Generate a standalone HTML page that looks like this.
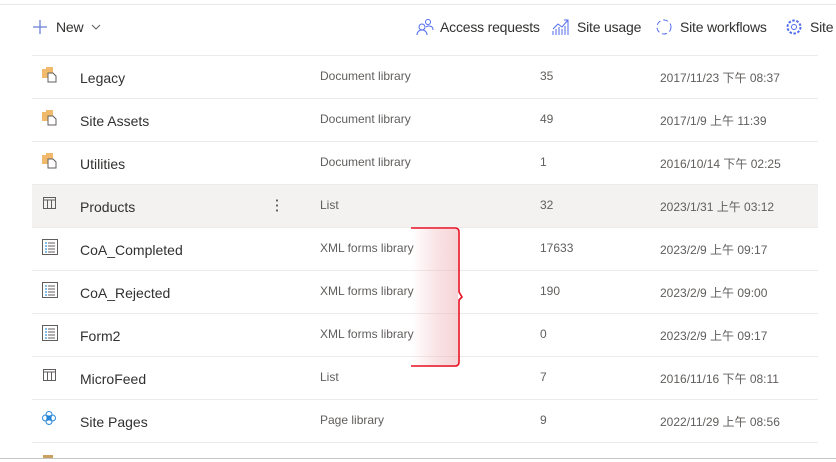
<!DOCTYPE html>
<html><head><meta charset="utf-8"><style>
body{margin:0;width:836px;height:462px;overflow:hidden;background:#fff;font-family:"Segoe UI","Liberation Sans","Noto Sans CJK TC",sans-serif;color:#323130;position:relative}
.a{position:absolute;white-space:nowrap}
.top{position:absolute;left:0;top:4px;width:836px;height:1px;background:#e8e8e8}
.hr{position:absolute;left:32px;width:786px;height:1px;background:#edebe9}
.name{font-size:14px;color:#323130;margin-top:1px}
.small{font-size:12px;color:#605e5c;margin-top:1px}
.cmd{font-size:14px;color:#323130;top:19px;letter-spacing:-0.2px}
</style></head><body>
<div class="top"></div>
<svg class="a" style="left:32px;top:19px" width="16" height="16"><path d="M8 1v14M1 8h14" stroke="#6b7fd7" stroke-width="1.3"/></svg>
<div class="a cmd" style="left:56px">New</div>
<svg class="a" style="left:91px;top:23px" width="10" height="8"><path d="M1 2l4 4 4-4" stroke="#605e5c" fill="none"/></svg>
<svg class="a" style="left:416px;top:18px" width="18" height="18"><circle cx="6" cy="9" r="3" fill="none" stroke="#4f6bed"/><path d="M1 17c0-3 2-5 5-5s5 2 5 5" fill="none" stroke="#4f6bed"/><circle cx="12" cy="4" r="2.5" fill="none" stroke="#4f6bed"/><path d="M10 9c1-1 2-1 3-1 2 0 4 1 4 4" fill="none" stroke="#4f6bed"/></svg>
<div class="a cmd" style="left:440px">Access requests</div>
<svg class="a" style="left:552px;top:18px" width="18" height="18"><path d="M1 17V13M4 17V11M7 17V9M10 17V11M13 17V8M16 17V5" stroke="#4f6bed"/><path d="M1 11l5-5 4 3 6-7M12 2h4v4" stroke="#4f6bed" fill="none"/></svg>
<div class="a cmd" style="left:577px">Site usage</div>
<svg class="a" style="left:655px;top:18px" width="18" height="18"><circle cx="9" cy="9" r="7" fill="none" stroke="#4f6bed" stroke-dasharray="5 3"/></svg>
<div class="a cmd" style="left:680px">Site workflows</div>
<svg class="a" style="left:785px;top:18px" width="18" height="18"><circle cx="9" cy="9" r="2.5" fill="none" stroke="#4f6bed"/><circle cx="9" cy="9" r="6.5" fill="none" stroke="#4f6bed" stroke-dasharray="2.5 1.6" stroke-width="2"/></svg>
<div class="a cmd" style="left:810px">Site</div>
<div class="hr" style="top:55px"></div>
<div class="a" style="left:32px;top:185px;width:786px;height:42px;background:#f3f2f1"></div>
<div class="a" style="left:276px;top:198px;width:2px;height:16px;background:radial-gradient(circle,#605e5c 1px,transparent 1.2px) 0 0/2px 5px"></div>

<div class="hr" style="top:98px"></div><div class="hr" style="top:141px"></div><div class="hr" style="top:184px"></div><div class="hr" style="top:227px"></div><div class="hr" style="top:270px"></div><div class="hr" style="top:313px"></div><div class="hr" style="top:356px"></div><div class="hr" style="top:399px"></div><div class="hr" style="top:442px"></div>
<div class="a" style="left:0;top:458px;width:836px;height:1px;background:#c8c6c4"></div>

<svg class="a" style="left:42px;top:67px" width="16" height="16"><rect x="0" y="2" width="11" height="9" fill="#f0b96b"/><rect x="4" y="0" width="7" height="3" fill="#f0b96b"/><path d="M6 6h5l3 3v6H6z" fill="#fff" stroke="#605e5c"/></svg>
<svg class="a" style="left:42px;top:110px" width="16" height="16"><rect x="0" y="2" width="11" height="9" fill="#f0b96b"/><rect x="4" y="0" width="7" height="3" fill="#f0b96b"/><path d="M6 6h5l3 3v6H6z" fill="#fff" stroke="#605e5c"/></svg>
<svg class="a" style="left:42px;top:153px" width="16" height="16"><rect x="0" y="2" width="11" height="9" fill="#f0b96b"/><rect x="4" y="0" width="7" height="3" fill="#f0b96b"/><path d="M6 6h5l3 3v6H6z" fill="#fff" stroke="#605e5c"/></svg>
<svg class="a" style="left:43px;top:197px" width="14" height="13"><rect x=".5" y=".5" width="12" height="11" fill="none" stroke="#605e5c"/><path d="M.5 3h12M4.5 3v9M8.5 3v9" stroke="#605e5c"/></svg>
<svg class="a" style="left:43px;top:369px" width="14" height="13"><rect x=".5" y=".5" width="12" height="11" fill="none" stroke="#605e5c"/><path d="M.5 3h12M4.5 3v9M8.5 3v9" stroke="#605e5c"/></svg>
<svg class="a" style="left:42px;top:239px" width="16" height="16"><rect x=".5" y=".5" width="15" height="15" fill="none" stroke="#605e5c"/><path d="M3 4h2M3 7h2M3 10h2M3 13h2" stroke="#0078d4"/><path d="M6 4h7M6 7h7M6 10h7M6 13h7" stroke="#605e5c"/></svg>
<svg class="a" style="left:42px;top:282px" width="16" height="16"><rect x=".5" y=".5" width="15" height="15" fill="none" stroke="#605e5c"/><path d="M3 4h2M3 7h2M3 10h2M3 13h2" stroke="#0078d4"/><path d="M6 4h7M6 7h7M6 10h7M6 13h7" stroke="#605e5c"/></svg>
<svg class="a" style="left:42px;top:325px" width="16" height="16"><rect x=".5" y=".5" width="15" height="15" fill="none" stroke="#605e5c"/><path d="M3 4h2M3 7h2M3 10h2M3 13h2" stroke="#0078d4"/><path d="M6 4h7M6 7h7M6 10h7M6 13h7" stroke="#605e5c"/></svg>
<svg class="a" style="left:42px;top:411px" width="14" height="14"><circle cx="7" cy="7" r="2.5" fill="#0078d4"/><circle cx="7" cy="3.5" r="3" fill="none" stroke="#2b88d8"/><circle cx="7" cy="10.5" r="3" fill="none" stroke="#2b88d8"/><circle cx="3.5" cy="7" r="3" fill="none" stroke="#2b88d8"/><circle cx="10.5" cy="7" r="3" fill="none" stroke="#2b88d8"/></svg>
<div class="a" style="left:43px;top:455px;width:10px;height:3px;background:#c8a060"></div>

<div class="a name" style="left:80px;top:69px">Legacy</div><div class="a small" style="left:320px;top:68px">Document library</div><div class="a small" style="left:540px;top:68px">35</div><div class="a small" style="left:660px;top:68px">2017/11/23 下午 08:37</div>
<div class="a name" style="left:80px;top:112px">Site Assets</div><div class="a small" style="left:320px;top:111px">Document library</div><div class="a small" style="left:540px;top:111px">49</div><div class="a small" style="left:660px;top:111px">2017/1/9 上午 11:39</div>
<div class="a name" style="left:80px;top:155px">Utilities</div><div class="a small" style="left:320px;top:154px">Document library</div><div class="a small" style="left:540px;top:154px">1</div><div class="a small" style="left:660px;top:154px">2016/10/14 下午 02:25</div>
<div class="a name" style="left:80px;top:198px">Products</div><div class="a small" style="left:320px;top:197px">List</div><div class="a small" style="left:540px;top:197px">32</div><div class="a small" style="left:660px;top:197px">2023/1/31 上午 03:12</div>
<div class="a name" style="left:80px;top:241px">CoA_Completed</div><div class="a small" style="left:320px;top:240px">XML forms library</div><div class="a small" style="left:540px;top:240px">17633</div><div class="a small" style="left:660px;top:240px">2023/2/9 上午 09:17</div>
<div class="a name" style="left:80px;top:284px">CoA_Rejected</div><div class="a small" style="left:320px;top:283px">XML forms library</div><div class="a small" style="left:540px;top:283px">190</div><div class="a small" style="left:660px;top:283px">2023/2/9 上午 09:00</div>
<div class="a name" style="left:80px;top:327px">Form2</div><div class="a small" style="left:320px;top:326px">XML forms library</div><div class="a small" style="left:540px;top:326px">0</div><div class="a small" style="left:660px;top:326px">2023/2/9 上午 09:17</div>
<div class="a name" style="left:80px;top:370px">MicroFeed</div><div class="a small" style="left:320px;top:369px">List</div><div class="a small" style="left:540px;top:369px">7</div><div class="a small" style="left:660px;top:369px">2016/11/16 下午 08:11</div>
<div class="a name" style="left:80px;top:413px">Site Pages</div><div class="a small" style="left:320px;top:412px">Page library</div><div class="a small" style="left:540px;top:412px">9</div><div class="a small" style="left:660px;top:412px">2022/11/29 上午 08:56</div>

<div class="a" style="left:412px;top:229px;width:46px;height:138px;background:linear-gradient(90deg,rgba(240,180,185,0) 0%,rgba(240,180,185,.35) 50%,rgba(235,170,175,.5) 100%)"></div>
<svg class="a" style="left:410px;top:226px" width="60" height="144"><path d="M1 2H45Q49 2 49 6V66L52 71L49 74V136Q49 140 45 140H1" fill="none" stroke="#e81123" stroke-width="1.6"/></svg>
</body></html>
